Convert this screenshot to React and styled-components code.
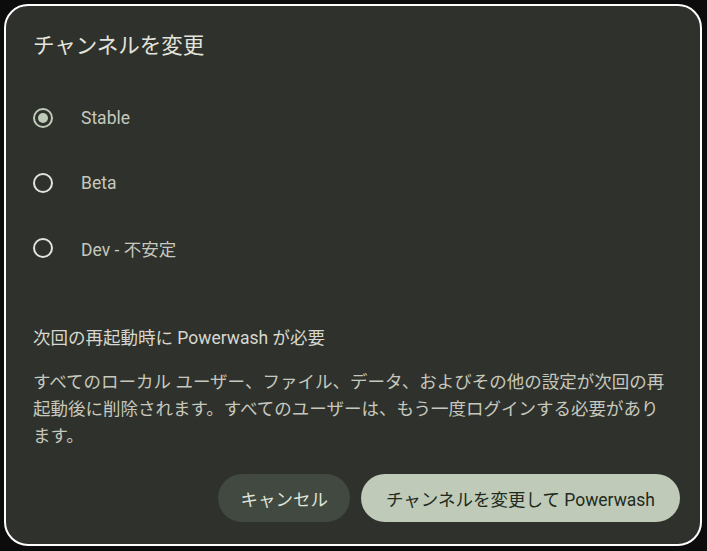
import React, { useState } from "react";
import styled, { createGlobalStyle } from "styled-components";

const GlobalStyle = createGlobalStyle`
  html, body {
    margin: 0;
    padding: 0;
    background: #0c0c0c;
  }
  body {
    font-family: "Roboto", "Noto Sans CJK JP", sans-serif;
  }
`;

const Page = styled.div`
  padding: 4px 5px 5px 4px;
`;

const Dialog = styled.div`
  box-sizing: border-box;
  height: 542px;
  border: 2px solid #ffffff;
  border-radius: 24px;
  background: #2f312c;
  padding: 26px 20px 22px 27px;
  display: flex;
  flex-direction: column;
`;

const Title = styled.h1`
  margin: 0;
  font-size: 21.5px;
  font-weight: 400;
  line-height: 28px;
  color: #e3e4dc;
`;

const Options = styled.div`
  margin-top: 34px;
  display: flex;
  flex-direction: column;
  gap: 17px;
`;

const Option = styled.label`
  display: flex;
  align-items: center;
  height: 48px;
  cursor: pointer;
  color: #c6c8be;
  font-size: 17.5px;
`;

const Ring = styled.span`
  box-sizing: border-box;
  width: 20px;
  height: 20px;
  margin-right: 28px;
  border-radius: 50%;
  border: 2px solid ${(p) => (p.$checked ? "#bfcab8" : "#e3e4dc")};
  display: flex;
  align-items: center;
  justify-content: center;

  &::after {
    content: "";
    width: 10px;
    height: 10px;
    border-radius: 50%;
    background: #bfcab8;
    display: ${(p) => (p.$checked ? "block" : "none")};
  }
`;

const Notice = styled.p`
  margin: 54px 0 0;
  font-size: 17.5px;
  line-height: 24px;
  color: #d6d8cf;
`;

const Body = styled.p`
  margin: 19px 0 0;
  font-size: 17.5px;
  line-height: 27px;
  color: #c6c8be;
`;

const Keep = styled.span`
  white-space: nowrap;
`;

const Actions = styled.div`
  margin-top: auto;
  display: flex;
  justify-content: flex-end;
  gap: 11px;
`;

const Button = styled.button`
  height: 48px;
  border: none;
  border-radius: 24px;
  padding: 0 ${(p) => (p.$primary ? "25px" : "22px")};
  font-family: "Roboto", "Noto Sans CJK JP", sans-serif;
  font-size: 17.5px;
  cursor: pointer;
  background: ${(p) => (p.$primary ? "#bfcab8" : "#414940")};
  color: ${(p) => (p.$primary ? "#222a20" : "#dfe4d8")};
`;

const channels = ["Stable", "Beta", "Dev - 不安定"];

export default function App() {
  const [channel, setChannel] = useState("Stable");

  return (
    <>
      <GlobalStyle />
      <Page>
        <Dialog>
          <Title>チャンネルを変更</Title>
          <Options>
            {channels.map((c) => (
              <Option key={c} onClick={() => setChannel(c)}>
                <Ring $checked={channel === c} />
                {c}
              </Option>
            ))}
          </Options>
          <Notice>次回の再起動時に Powerwash が必要</Notice>
          <Body>
            すべてのローカル ユーザー、ファイル、データ、およびその他の設定が次回の再起動後に削除されます。すべてのユーザーは、もう一度ログインする必要があり
            <Keep>ます。</Keep>
          </Body>
          <Actions>
            <Button>キャンセル</Button>
            <Button $primary>チャンネルを変更して Powerwash</Button>
          </Actions>
        </Dialog>
      </Page>
    </>
  );
}
